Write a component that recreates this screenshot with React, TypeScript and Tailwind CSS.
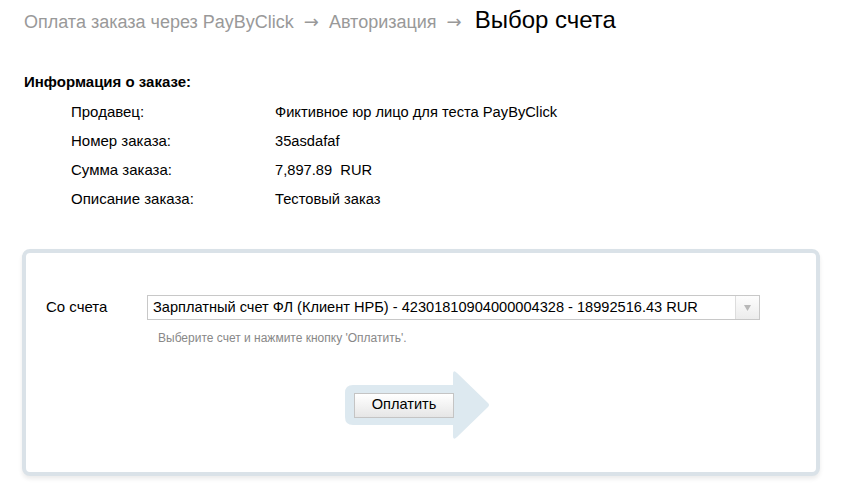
import React from 'react';

const orderInfo = [
    { label: 'Продавец:', value: 'Фиктивное юр лицо для теста PayByClick' },
    { label: 'Номер заказа:', value: '35asdafaf' },
    { label: 'Сумма заказа:', value: '7,897.89\u00a0 RUR' },
    { label: 'Описание заказа:', value: 'Тестовый заказ' },
];

export default function App() {
    return (
        <div className="w-[845px] h-[498px] bg-white text-black font-['Liberation_Sans',Arial,sans-serif] overflow-hidden">
            {/* Breadcrumbs */}
            <div className="flex items-baseline pl-6 pt-[2px] h-[40px]">
                <span className="text-[18px] text-[#999]">Оплата заказа через PayByClick</span>
                <span className="text-[18px] text-[#999] mx-[10px] font-['DejaVu_Sans',sans-serif]">→</span>
                <span className="text-[18px] text-[#999]">Авторизация</span>
                <span className="text-[18px] text-[#999] ml-[10px] mr-[13px] font-['DejaVu_Sans',sans-serif]">→</span>
                <span className="text-[24px] text-black">Выбор счета</span>
            </div>

            {/* Order info */}
            <div className="pl-6 pt-[32px]">
                <h2 className="text-[15px] font-bold leading-[20px]">Информация о заказе:</h2>
                <div className="pt-[6px]">
                    {orderInfo.map((row) => (
                        <div key={row.label} className="flex items-center h-[29px]">
                            <span className="w-[251px] pl-[47px] shrink-0 text-[15px]">{row.label}</span>
                            <span className="text-[14.7px]">{row.value}</span>
                        </div>
                    ))}
                </div>
            </div>

            {/* Account selection panel */}
            <div className="ml-[22px] mt-[35px] w-[798px] h-[227px] border-4 border-[#dae2e8] rounded-[8px] shadow-[0_3px_4px_rgba(0,0,0,0.08)] bg-white">
                <div className="flex items-center pt-[42px] pl-[20px]">
                    <span className="w-[101px] text-[15px]">Со счета</span>
                    <div className="flex items-stretch w-[613px] h-[25px] border border-[#c8c8c8] bg-white">
                        <div className="flex-1 flex items-center pl-[5px] text-[14.6px] whitespace-nowrap overflow-hidden">
                            Зарплатный счет ФЛ (Клиент НРБ) - 42301810904000004328 - 18992516.43 RUR
                        </div>
                        <div className="w-[24px] flex items-center justify-center border-l border-[#ddd] bg-gradient-to-b from-[#fdfdfd] to-[#ececec]">
                            <svg width="7" height="6" viewBox="0 0 7 6">
                                <path d="M0 0h7L3.5 6z" fill="#b8b8b8" />
                            </svg>
                        </div>
                    </div>
                </div>
                <div className="pl-[132px] pt-[9px] text-[12px] text-[#888]">
                    Выберите счет и нажмите кнопку 'Оплатить'.
                </div>

                {/* Pay button with arrow */}
                <div className="flex pt-[23px] pl-[319px]">
                    <div className="relative w-[146px] h-[70px] flex items-center">
                        <svg className="absolute left-0 top-0" width="146" height="70" viewBox="0 0 146 70">
                            <path
                                d="M8 15 H108 V4 Q108 -1 112 3 L143 33 Q145 35 143 37 L112 67 Q108 71 108 66 V55 H8 Q0 55 0 47 V23 Q0 15 8 15 Z"
                                fill="#dde9f0"
                            />
                        </svg>
                        <button className="relative ml-[9px] w-[100px] h-[25px] text-[14.6px] border border-[#c4c4c4] bg-gradient-to-b from-[#ffffff] to-[#e6e6e6] text-black">
                            Оплатить
                        </button>
                    </div>
                </div>
            </div>
        </div>
    );
}
